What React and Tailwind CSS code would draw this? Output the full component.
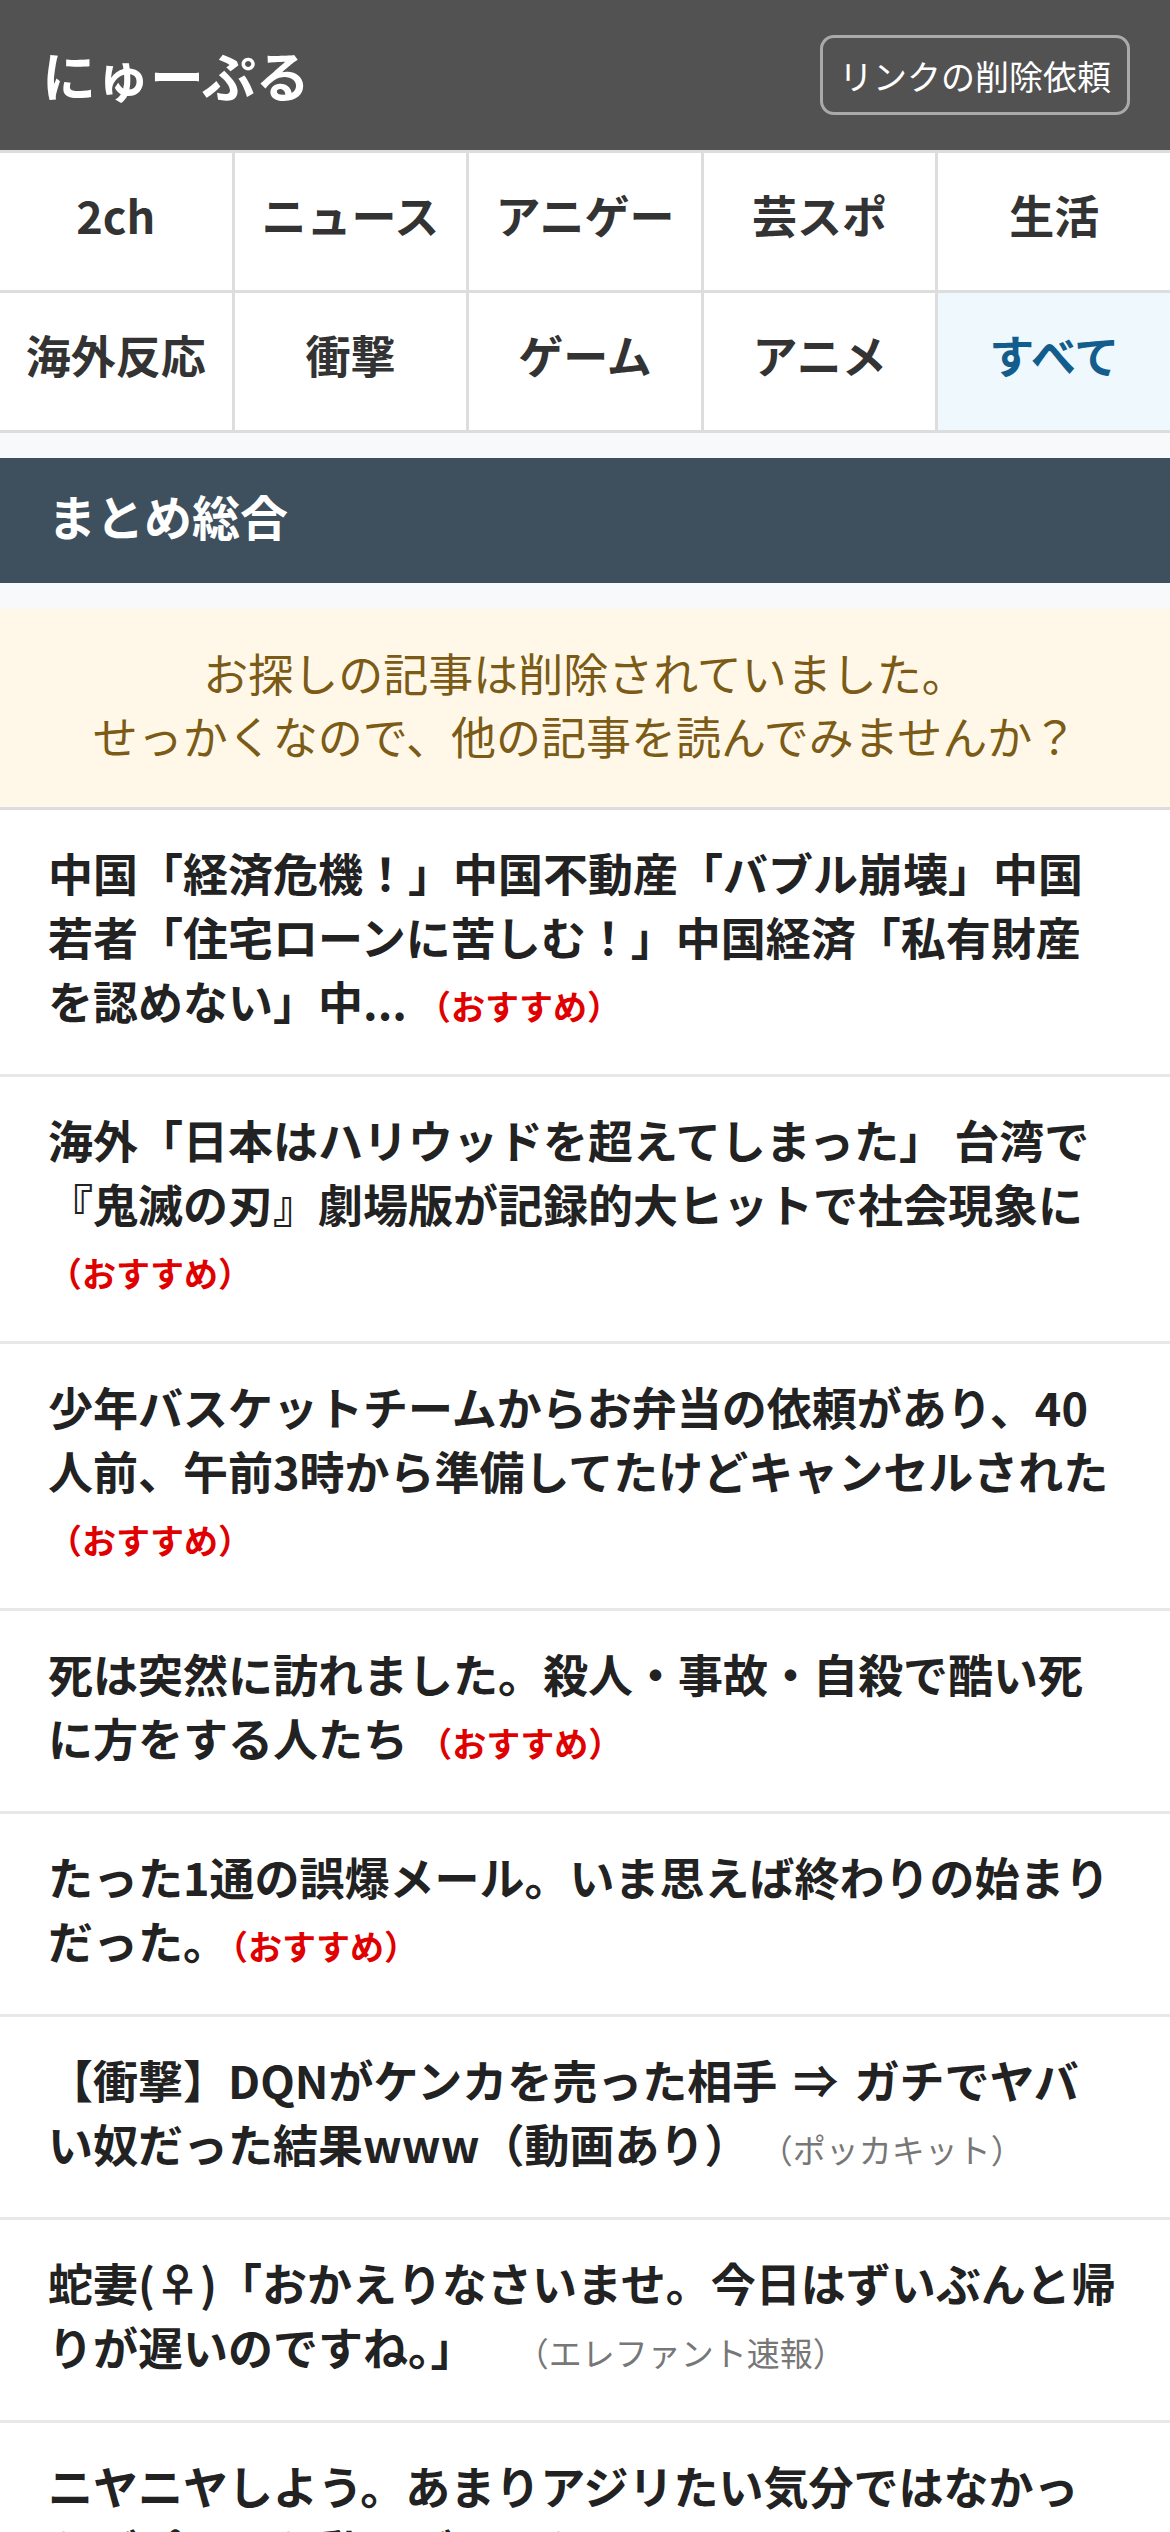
const NAV = [
  { label: "2ch" },
  { label: "ニュース" },
  { label: "アニゲー" },
  { label: "芸スポ" },
  { label: "生活" },
  { label: "海外反応" },
  { label: "衝撃" },
  { label: "ゲーム" },
  { label: "アニメ" },
  { label: "すべて", active: true },
];

const ARTICLES = [
  {
    title: "中国「経済危機！」中国不動産「バブル崩壊」中国若者「住宅ローンに苦しむ！」中国経済「私有財産を認めない」中...",
    rec: true,
  },
  {
    title: "海外「日本はハリウッドを超えてしまった」 台湾で『鬼滅の刃』劇場版が記録的大ヒットで社会現象に",
    rec: true,
  },
  {
    title: "少年バスケットチームからお弁当の依頼があり、40人前、午前3時から準備してたけどキャンセルされた",
    rec: true,
  },
  { title: "死は突然に訪れました。殺人・事故・自殺で酷い死に方をする人たち", rec: true },
  { title: "たった1通の誤爆メール。いま思えば終わりの始まりだった。", rec: true, tight: true },
  {
    title: "【衝撃】DQNがケンカを売った相手",
    arrow: true,
    rest: "ガチでヤバい奴だった結果www（動画あり）",
    source: "（ポッカキット）",
  },
  {
    title: "蛇妻(♀)「おかえりなさいませ。今日はずいぶんと帰りが遅いのですね。」",
    source: "（エレファント速報）",
    wide: true,
  },
  {
    title: "ニヤニヤしよう。あまりアジリたい気分ではなかったがポチった動画があった",
    source: "（ニュー速）",
  },
];

function Header() {
  return (
    <header className="flex h-[150px] items-center justify-between bg-[#525252] pl-[42px] pr-[40px]">
      <h1 className="text-[54px] font-bold leading-none text-white">にゅーぷる</h1>
      <button className="flex h-[80px] w-[310px] items-center justify-center rounded-[14px] border-[3px] border-[#aaaaaa] text-[34px] text-white">
        リンクの削除依頼
      </button>
    </header>
  );
}

function CategoryNav() {
  return (
    <nav className="grid grid-cols-5 gap-[3px] border-y-[3px] border-[#dddddd] bg-[#dddddd]">
      {NAV.map((item) => (
        <a
          key={item.label}
          className={
            item.active
              ? "flex h-[137px] items-center justify-center bg-[#eef8fd] pb-[14px] text-[45px] font-bold text-[#135d8c]"
              : "flex h-[137px] items-center justify-center bg-white pb-[14px] text-[45px] font-bold text-[#333333]"
          }
        >
          {item.label}
        </a>
      ))}
    </nav>
  );
}

function ArticleRow({ item }) {
  return (
    <li className="border-b-[3px] border-[#e8e8e8] px-[48px] pt-[31px] pb-[41px]">
      <p className="text-[45px] font-bold leading-[64px] text-[#222222]">
        {item.title}
        {item.arrow && (
          <>
            {" "}
            <span className="px-[6px]">⇒</span> {item.rest}
          </>
        )}
        {!item.tight && " "}
        {item.rec && (
          <span
            className={
              item.tight
                ? "ml-[3px] text-[34px] font-bold leading-none text-[#e00000]"
                : "text-[34px] font-bold leading-none text-[#e00000]"
            }
          >
            （おすすめ）
          </span>
        )}
        {item.source && (
          <span
            className={
              item.wide
                ? "ml-[30px] text-[33px] font-normal leading-none text-[#777777]"
                : "text-[33px] font-normal leading-none text-[#777777]"
            }
          >
            {item.source}
          </span>
        )}
      </p>
    </li>
  );
}

export default function App() {
  return (
    <div
      className="min-h-screen bg-white"
      style={{ fontFamily: '"Noto Sans CJK JP", "Noto Sans", sans-serif' }}
    >
      <Header />
      <CategoryNav />

      <div className="h-[25px] bg-[#f8f9fa]" />
      <section className="flex h-[125px] items-center bg-[#3e4f5e] px-[48px] pb-[12px]">
        <h2 className="text-[48px] font-bold text-white">まとめ総合</h2>
      </section>
      <div className="h-[26px] bg-[#f8f9fa]" />

      <div className="border-b-[3px] border-[#dddddd] bg-[#fff8e8] pt-[32px] pb-[40px] text-center text-[45px] leading-[63px] text-[#7b5b16]">
        <p>お探しの記事は削除されていました。</p>
        <p>せっかくなので、他の記事を読んでみませんか？</p>
      </div>

      <ul>
        {ARTICLES.map((item, i) => (
          <ArticleRow key={i} item={item} />
        ))}
      </ul>
    </div>
  );
}
